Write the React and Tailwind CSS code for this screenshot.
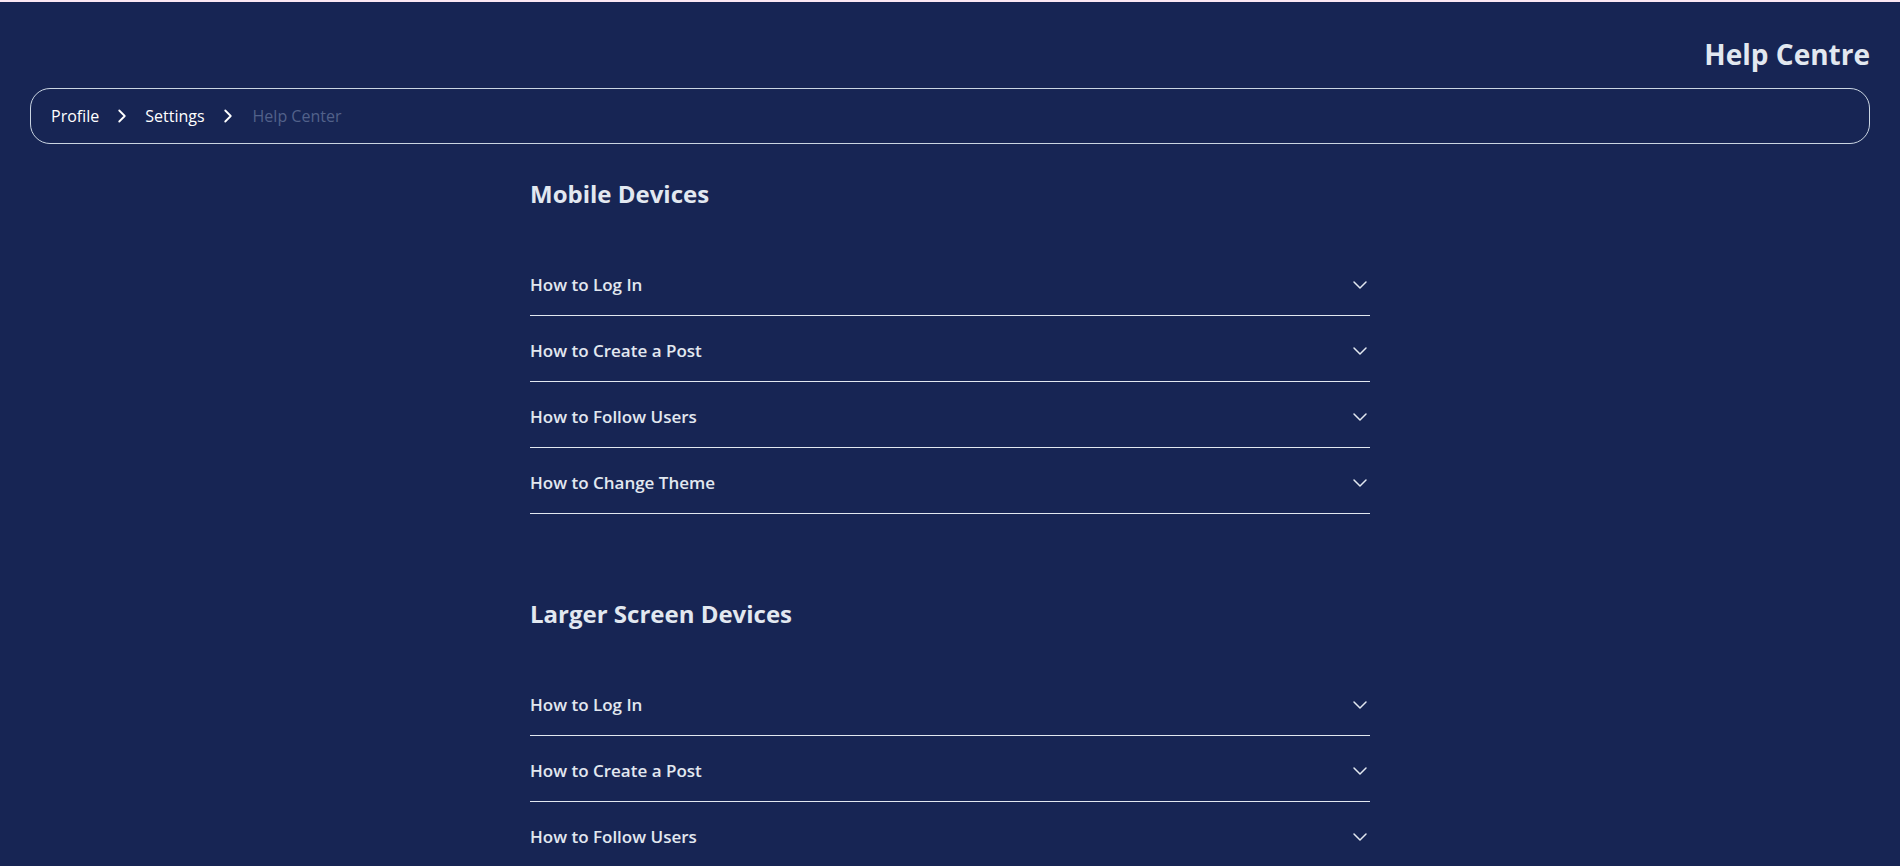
import React from 'react'
import { ChevronDown, ChevronRight } from 'lucide-react'

const sections = [
  {
    title: 'Mobile Devices',
    items: ['How to Log In', 'How to Create a Post', 'How to Follow Users', 'How to Change Theme'],
  },
  {
    title: 'Larger Screen Devices',
    items: ['How to Log In', 'How to Create a Post', 'How to Follow Users', 'How to Change Theme'],
  },
]

function FaqRow({ label }) {
  return (
    <button className="w-full h-[66px] pt-[4px] flex items-center justify-between border-b border-slate-200 text-left">
      <span className="text-[17px] font-semibold text-slate-200">{label}</span>
      <ChevronDown size={24} strokeWidth={1.5} className="text-slate-200 -mr-[2px]" />
    </button>
  )
}

export default function App() {
  return (
    <div
      className="min-h-screen bg-[#172554] border-t-2 border-[#fbe7f3] text-slate-200"
      style={{ fontFamily: '"Open Sans", "Noto Sans", sans-serif' }}
    >
      {/* Header */}
      <div className="px-[30px] pt-[34px]">
        <div className="flex justify-end">
          <h1 className="text-[28px] leading-[36px] font-bold text-slate-200">Help Centre</h1>
        </div>

        {/* Breadcrumb */}
        <nav className="mt-4 h-[56px] rounded-[20px] border border-slate-300 px-5 flex items-center gap-[12px] text-[16px]">
          <span className="text-white">Profile</span>
          <ChevronRight size={22} strokeWidth={2} className="text-white" />
          <span className="text-white">Settings</span>
          <ChevronRight size={22} strokeWidth={2} className="text-white" />
          <span className="text-[#52618a] ml-[2px]">Help Center</span>
        </nav>
      </div>

      {/* Content */}
      <main className="mx-auto w-[840px] pt-[34px] pb-16 flex flex-col gap-[84px]">
        {sections.map((s) => (
          <section key={s.title}>
            <h2 className="text-[24px] leading-[32px] font-bold text-slate-200 mb-[40px]">{s.title}</h2>
            <div className="flex flex-col">
              {s.items.map((item) => (
                <FaqRow key={item} label={item} />
              ))}
            </div>
          </section>
        ))}
      </main>
    </div>
  )
}
